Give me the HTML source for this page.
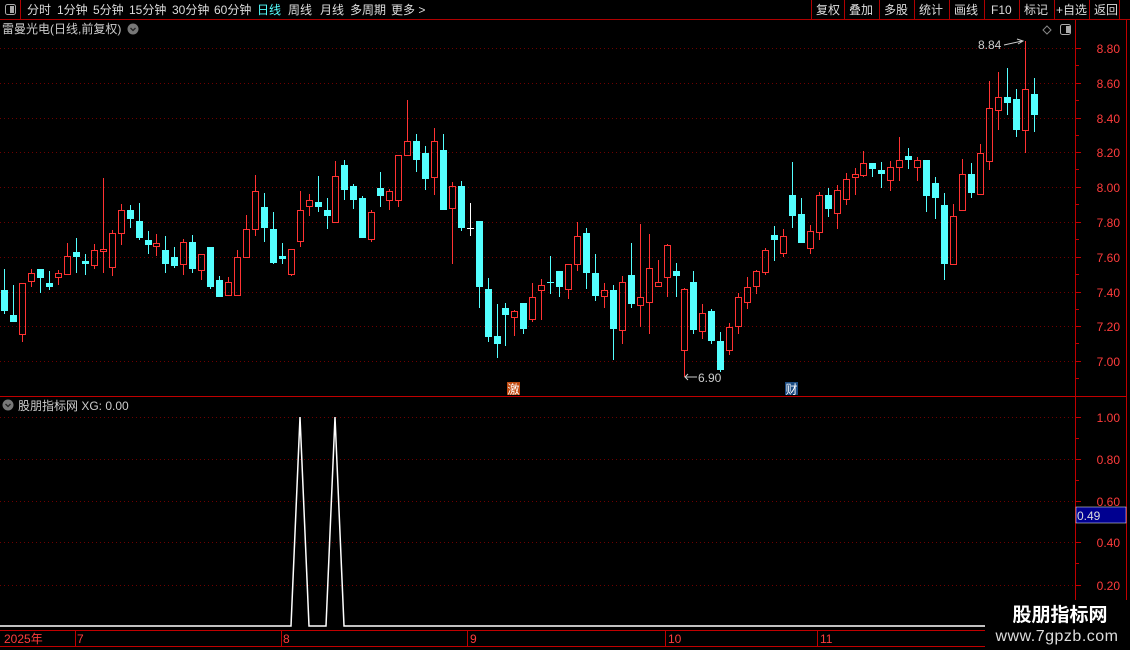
<!DOCTYPE html>
<html><head><meta charset="utf-8">
<style>
html,body{margin:0;padding:0;background:#000;width:1130px;height:650px;overflow:hidden}
svg{display:block}
text{font-family:"Liberation Sans","Noto Sans CJK SC",sans-serif}
</style></head><body>
<svg id="s" width="1130" height="650" xmlns="http://www.w3.org/2000/svg">
<rect width="1130" height="650" fill="#000"/>
<line x1="0" y1="19.5" x2="1130" y2="19.5" stroke="#b00000"/>
<line x1="20.5" y1="0" x2="20.5" y2="19" stroke="#b00000"/>
<rect x="5.5" y="4.5" width="10" height="10" rx="2" fill="none" stroke="#aaa"/>
<rect x="10" y="6" width="4" height="7" fill="#aaa"/>
<g font-size="12" fill="#ddd">
<text x="27" y="14">分时</text><text x="57" y="14">1分钟</text><text x="93" y="14">5分钟</text>
<text x="129" y="14">15分钟</text><text x="172" y="14">30分钟</text><text x="214" y="14">60分钟</text>
<text x="257" y="14" fill="#54ffff">日线</text><text x="288" y="14">周线</text><text x="320" y="14">月线</text>
<text x="350" y="14">多周期</text><text x="391" y="14">更多 &gt;</text>
</g>
<g stroke="#b00000">
<line x1="811.5" y1="0" x2="811.5" y2="19"/><line x1="844.5" y1="0" x2="844.5" y2="19"/>
<line x1="879.5" y1="0" x2="879.5" y2="19"/><line x1="914.5" y1="0" x2="914.5" y2="19"/>
<line x1="949.5" y1="0" x2="949.5" y2="19"/><line x1="984.5" y1="0" x2="984.5" y2="19"/>
<line x1="1019.5" y1="0" x2="1019.5" y2="19"/><line x1="1054.5" y1="0" x2="1054.5" y2="19"/>
<line x1="1089.5" y1="0" x2="1089.5" y2="19"/><line x1="1119.5" y1="0" x2="1119.5" y2="19"/>
</g>
<g font-size="12" fill="#ddd">
<text x="816" y="14">复权</text><text x="849" y="14">叠加</text><text x="884" y="14">多股</text>
<text x="919" y="14">统计</text><text x="954" y="14">画线</text><text x="991" y="14">F10</text>
<text x="1024" y="14">标记</text><text x="1056" y="14">+自选</text><text x="1094" y="14">返回</text>
</g>
<text x="2" y="33" font-size="12" fill="#ccc">雷曼光电(日线,前复权)</text>
<circle cx="133" cy="29" r="5.5" fill="#777"/>
<path d="M130.5 28 L133 30.5 L135.5 28" stroke="#222" stroke-width="1.3" fill="none"/>
<path d="M1047 26 L1051 30 L1047 34 L1043 30 Z" fill="none" stroke="#888"/>
<rect x="1060.5" y="24.5" width="10" height="10" rx="2" fill="none" stroke="#aaa"/>
<rect x="1066" y="26" width="4" height="7" fill="#aaa"/>
<g id="grid"></g>
<line x1="1075.5" y1="20" x2="1075.5" y2="630" stroke="#c00000"/>
<line x1="1126.5" y1="20" x2="1126.5" y2="630" stroke="#c00000"/>
<line x1="0" y1="396.5" x2="1075" y2="396.5" stroke="#c00000"/>
<line x1="1076" y1="396.5" x2="1126" y2="396.5" stroke="#c00000"/>
<g id="ticks"></g>
<g font-size="12" fill="#ff3c3c" text-anchor="end" id="labels"></g>
<g id="candles"></g>
<text x="978" y="49" font-size="12" fill="#ccc">8.84</text>
<path d="M1004 45 L1022 41 M1017 39 L1023 41 L1018 44" stroke="#ccc" fill="none"/>
<path d="M685 377 L697 377 M688 374 L685 377 L688 380" stroke="#ccc" fill="none"/>
<text x="698" y="382" font-size="12" fill="#ccc">6.90</text>
<rect x="507" y="382" width="13" height="13" fill="#c04a10"/>
<text x="507.5" y="393.5" font-size="12" fill="#fff">激</text>
<rect x="785" y="382" width="13" height="13" fill="#1a4a80"/>
<text x="785.5" y="393.5" font-size="12" fill="#fff">财</text>
<circle cx="8" cy="405" r="5.5" fill="#777"/>
<path d="M5.5 404 L8 406.5 L10.5 404" stroke="#222" stroke-width="1.3" fill="none"/>
<text x="18" y="410" font-size="12" fill="#ccc">股朋指标网  XG: 0.00</text>
<polyline points="0,626 291,626 300,417 309,626 326,626 335,417 344,626 985,626" fill="none" stroke="#fff" stroke-width="1.5"/>
<rect x="1076" y="507" width="50" height="16" fill="#000090" stroke="#fff" stroke-width="0.5"/>
<text x="1077" y="520" font-size="12" fill="#ddd">0.49</text>
<line x1="0" y1="630.5" x2="1130" y2="630.5" stroke="#c00000"/>
<line x1="0" y1="646.5" x2="1130" y2="646.5" stroke="#c00000"/>
<g stroke="#c00000">
<line x1="75.5" y1="630" x2="75.5" y2="646"/><line x1="281.5" y1="630" x2="281.5" y2="646"/>
<line x1="467.5" y1="630" x2="467.5" y2="646"/><line x1="665.5" y1="630" x2="665.5" y2="646"/>
<line x1="817.5" y1="630" x2="817.5" y2="646"/>
</g>
<g font-size="12" fill="#ff3c3c">
<text x="4" y="643">2025年</text><text x="77" y="643">7</text><text x="283" y="643">8</text>
<text x="470" y="643">9</text><text x="668" y="643">10</text><text x="820" y="643">11</text>
</g>
<rect x="985" y="600" width="145" height="50" fill="#000"/>
<text x="1060" y="621" font-size="19" font-weight="bold" fill="#fff" text-anchor="middle">股朋指标网</text>
<text x="1057" y="641" font-size="16" fill="#ddd" text-anchor="middle" letter-spacing="0.5">www.7gpzb.com</text>
</svg>
<script>
var NS="http://www.w3.org/2000/svg";
function el(p,n,a){var e=document.createElementNS(NS,n);for(var k in a)e.setAttribute(k,a[k]);p.appendChild(e);return e;}
var grid=document.getElementById('grid'),ticks=document.getElementById('ticks'),lab=document.getElementById('labels');
var pl=[["8.80",48],["8.60",82.8],["8.40",117.6],["8.20",152.4],["8.00",187.2],["7.80",222],["7.60",256.8],["7.40",291.6],["7.20",326.4],["7.00",361.2],
["1.00",417],["0.80",459],["0.60",500.5],["0.40",542],["0.20",584.5]];
pl.forEach(function(p){var y=Math.round(p[1])+0.5;
el(grid,'line',{x1:0,y1:y,x2:1075,y2:y,stroke:'#6e0000','stroke-dasharray':'1 3'});
el(ticks,'line',{x1:1076,y1:y,x2:1081,y2:y,stroke:'#c00000'});
var t=el(lab,'text',{x:1120,y:Math.round(p[1])+5});t.textContent=p[0];});
for(var y=65;y<390;y+=34.8)el(ticks,'line',{x1:1076,y1:Math.round(y)+0.5,x2:1079,y2:Math.round(y)+0.5,stroke:'#c00000'});
[438,480,521,563,605].forEach(function(y){el(ticks,'line',{x1:1076,y1:y+0.5,x2:1079,y2:y+0.5,stroke:'#c00000'});});
var D=[[269,290,311,314,'c'],[285,315,322,322,'c'],[283,283,334,342,'r'],[269,273,281,287,'r'],[269,269,278,293,'c'],
[271,283,287,290,'c'],[270,273,277,285,'r'],[243,256,274,274,'r'],[238,252,257,273,'c'],[254,261,264,275,'c'],
[244,250,265,269,'r'],[178,249,251,273,'r'],[230,233,267,276,'r'],[204,210,233,245,'r'],[205,210,219,228,'c'],
[203,221,238,240,'c'],[231,240,245,254,'c'],[234,243,246,256,'r'],[236,250,264,273,'c'],[247,257,266,268,'c'],
[239,242,264,275,'r'],[235,242,269,273,'c'],[254,254,270,280,'r'],[247,247,287,289,'c'],[276,280,297,297,'c'],
[277,282,295,295,'r'],[250,257,295,295,'r'],[215,229,257,257,'r'],[175,191,229,236,'r'],[193,207,228,242,'c'],
[212,229,263,264,'c'],[243,256,259,264,'c'],[249,249,274,276,'r'],[191,210,241,247,'r'],[194,200,206,216,'r'],
[176,202,207,212,'c'],[198,210,216,229,'c'],[161,176,222,222,'r'],[160,165,190,200,'c'],[184,186,200,209,'c'],
[196,198,238,238,'c'],[210,212,239,242,'r'],[172,188,196,207,'c'],[189,191,200,210,'r'],[155,155,200,207,'r'],
[100,141,155,155,'r'],[134,141,160,172,'c'],[146,153,179,190,'c'],[128,141,177,195,'r'],[134,150,210,210,'c'],
[182,186,208,264,'r'],[181,186,228,231,'c'],[203,228,228,236,'w'],[221,221,287,308,'c'],[278,289,337,342,'c'],
[304,336,344,358,'c'],[303,308,315,346,'c'],[310,311,317,336,'r'],[303,303,329,334,'c'],[283,297,319,322,'r'],
[279,285,290,320,'r'],[256,282,282,294,'c'],[271,271,287,297,'c'],[264,264,289,299,'r'],[222,236,264,271,'r'],
[228,233,273,289,'c'],[254,273,296,301,'c'],[283,290,296,308,'r'],[285,290,329,360,'c'],[276,282,330,344,'r'],
[243,275,304,308,'c'],[224,297,305,327,'r'],[234,268,302,334,'r'],[260,282,286,286,'r'],[244,245,277,297,'r'],
[263,271,276,297,'c'],[288,289,350,377,'r'],[271,282,330,334,'c'],[304,313,331,339,'r'],[309,311,341,344,'c'],
[332,341,370,372,'c'],[323,327,350,355,'r'],[293,297,326,334,'r'],[277,287,302,309,'r'],[270,271,286,294,'r'],
[248,250,272,275,'r'],[226,235,240,261,'c'],[229,236,253,257,'r'],[162,195,216,228,'c'],[198,214,243,243,'c'],
[225,231,248,254,'r'],[192,195,232,240,'r'],[188,195,209,217,'c'],[185,190,213,229,'r'],[173,179,199,205,'r'],
[168,174,177,195,'r'],[151,163,175,177,'r'],[163,163,169,177,'c'],[162,170,174,188,'c'],[161,167,180,191,'r'],
[137,160,167,181,'r'],[148,156,160,169,'c'],[157,160,167,181,'r'],[160,160,196,212,'c'],[177,183,198,219,'c'],
[193,205,264,280,'c'],[204,216,264,264,'r'],[159,174,210,210,'r'],[163,174,193,198,'c'],[144,153,194,194,'r'],
[81,108,161,170,'r'],[72,97,110,130,'r'],[68,97,103,115,'c'],[89,99,130,137,'c'],[41,89,130,153,'r'],[78,94,115,132,'c']];
var g=document.getElementById('candles');
D.forEach(function(d,i){var cx=Math.round(4.3+8.95*i);var col=d[4]=='c'?'#54ffff':(d[4]=='r'?'#ff3232':'#ffffff');
var xl=cx+0.5;
if(d[4]=='r'){
 if(d[0]<d[1])el(g,'line',{x1:xl,y1:d[0],x2:xl,y2:d[1],stroke:col});
 if(d[3]>d[2])el(g,'line',{x1:xl,y1:d[2],x2:xl,y2:d[3],stroke:col});
 var h=Math.max(d[2]-d[1],1);
 el(g,'rect',{x:cx-2.5,y:d[1]+0.5,width:6,height:h,fill:'none',stroke:col});
}else{
 el(g,'line',{x1:xl,y1:d[0],x2:xl,y2:d[3],stroke:col});
 var h=Math.max(d[2]-d[1],1);
 el(g,'rect',{x:cx-3,y:d[1],width:7,height:h,fill:col});
}});
</script>
</body></html>
